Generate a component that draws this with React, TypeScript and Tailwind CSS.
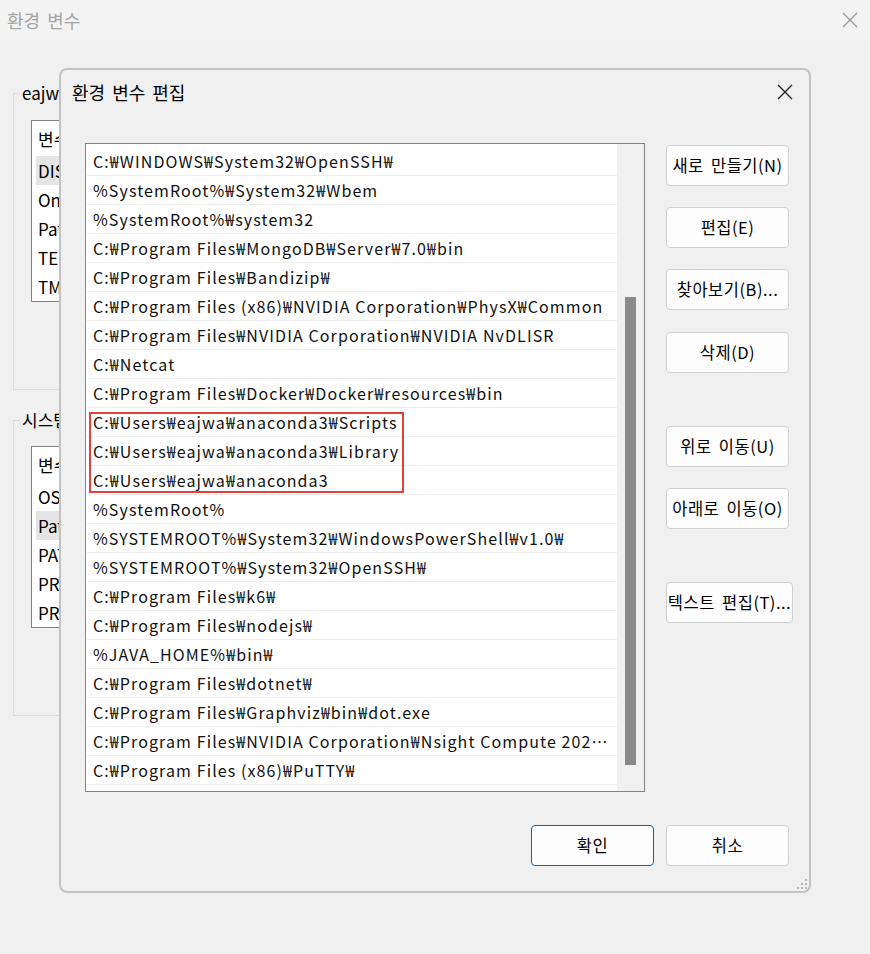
import React from 'react';

const paths = [
  'C:₩WINDOWS₩System32₩OpenSSH₩',
  '%SystemRoot%₩System32₩Wbem',
  '%SystemRoot%₩system32',
  'C:₩Program Files₩MongoDB₩Server₩7.0₩bin',
  'C:₩Program Files₩Bandizip₩',
  'C:₩Program Files (x86)₩NVIDIA Corporation₩PhysX₩Common',
  'C:₩Program Files₩NVIDIA Corporation₩NVIDIA NvDLISR',
  'C:₩Netcat',
  'C:₩Program Files₩Docker₩Docker₩resources₩bin',
  'C:₩Users₩eajwa₩anaconda3₩Scripts',
  'C:₩Users₩eajwa₩anaconda3₩Library',
  'C:₩Users₩eajwa₩anaconda3',
  '%SystemRoot%',
  '%SYSTEMROOT%₩System32₩WindowsPowerShell₩v1.0₩',
  '%SYSTEMROOT%₩System32₩OpenSSH₩',
  'C:₩Program Files₩k6₩',
  'C:₩Program Files₩nodejs₩',
  '%JAVA_HOME%₩bin₩',
  'C:₩Program Files₩dotnet₩',
  'C:₩Program Files₩Graphviz₩bin₩dot.exe',
  'C:₩Program Files₩NVIDIA Corporation₩Nsight Compute 2024.1.0₩',
  'C:₩Program Files (x86)₩PuTTY₩',
];

const userVars = ['DISPLAY', 'OneDrive', 'Path', 'TEMP', 'TMP'];
const sysVars = ['OS', 'Path', 'PATHEXT', 'PROCESSOR_ARCHITECTURE', 'PROCESSOR_IDENTIFIER'];

const font = { fontFamily: '"Noto Sans CJK KR", "Noto Sans", sans-serif' };

function CloseIcon({ color }: { color: string }) {
  return (
    <svg width="16" height="16" viewBox="0 0 16 16">
      <path d="M1 1L15 15M15 1L1 15" stroke={color} strokeWidth="1.3" />
    </svg>
  );
}

function VarList({ items, selected }: { items: string[]; selected: number }) {
  return (
    <div className="ml-[17px] w-[700px] bg-white border border-[#828282]">
      <div className="h-[35px] flex items-center pl-[6px] text-[17px] text-black">변수</div>
      {items.map((v, i) => (
        <div
          key={v + i}
          className={
            i === selected
              ? 'h-[29px] flex items-center ml-[4px] pl-[2px] text-[17px] text-black bg-[#e5e5e5]'
              : 'h-[29px] flex items-center ml-[4px] pl-[2px] text-[17px] text-black'
          }
        >
          {v}
        </div>
      ))}
    </div>
  );
}

function Btn({
  label,
  width = 'w-[123px]',
  border = 'border-[#d0d0d0]',
  className = '',
}: {
  label: string;
  width?: string;
  border?: string;
  className?: string;
}) {
  return (
    <div
      className={`${width} ${border} ${className} h-[41px] flex items-center justify-center rounded-[4px] border bg-[#fdfdfd] text-[16.5px] text-black whitespace-nowrap tracking-[0.5px] [word-spacing:3px]`}
    >
      {label}
    </div>
  );
}

export default function App() {
  return (
    <div className="relative w-[870px] h-[954px] bg-[#f0f0f0] overflow-hidden" style={font}>
      {/* parent window: 환경 변수 */}
      <div className="h-[40px] bg-[#f3f3f3] flex items-center justify-between pl-[7px] pr-[12px]">
        <span className="text-[18px] text-[#a3a3a3] [word-spacing:3px]">환경 변수</span>
        <CloseIcon color="#9a9a9a" />
      </div>

      {/* only the left strip of the parent window is left uncovered */}
      <div className="w-[61px] overflow-hidden">
        <div className="w-[780px] pl-[13px] pt-[53px] flex flex-col">
          <div className="relative h-[297px] w-[760px] border border-[#dcdcdc] pt-[26px]">
            <span className="absolute left-[6px] -top-[12px] px-[2px] bg-[#f0f0f0] text-[17px] leading-[22px] text-black">
              eajwa에 대한 사용자 변수(U)
            </span>
            <VarList items={userVars} selected={0} />
          </div>
          <div className="relative mt-[30px] h-[296px] w-[760px] border border-[#dcdcdc] pt-[25px]">
            <span className="absolute left-[6px] -top-[12px] px-[2px] bg-[#f0f0f0] text-[17px] leading-[22px] text-black">
              시스템 변수(S)
            </span>
            <VarList items={sysVars} selected={1} />
          </div>
        </div>
      </div>

      {/* dialog: 환경 변수 편집 */}
      <div className="absolute left-[59px] top-[68px] w-[752px] h-[825px] rounded-[8px] border-2 border-[#c2c2c2] bg-[#f0f0f0] flex flex-col">
        <div className="h-[42px] flex items-center justify-between pl-[11px] pr-[16px] pt-[2px]">
          <span className="text-[18px] text-black [word-spacing:3px]">환경 변수 편집</span>
          <CloseIcon color="#1a1a1a" />
        </div>

        <div className="flex pl-[24px] pt-[31px]">
          <div className="relative w-[560px] h-[649px] bg-white border border-[#828282] flex">
            <div className="w-[531px] pt-[3px] pl-[1px]">
              {paths.map((p) => (
                <div
                  key={p}
                  className="h-[29px] flex items-center border-b border-[#efefef] pl-[6px] pr-[2px] text-[16px] text-[#111] tracking-[1.1px]"
                >
                  <span className="truncate">{p}</span>
                </div>
              ))}
            </div>
            <div className="w-[27px] bg-[#f0f0f0] flex justify-center pt-[153px]">
              <div className="w-[11px] h-[468px] bg-[#8a8a8a]" />
            </div>
            <div className="absolute left-[3px] top-[268px] w-[315px] h-[81px] border-2 border-[#e04040]" />
          </div>

          <div className="ml-[21px] pt-[2px] flex flex-col w-[128px]">
            <Btn label="새로 만들기(N)" />
            <Btn label="편집(E)" className="mt-[21px]" />
            <Btn label="찾아보기(B)..." className="mt-[21px]" />
            <Btn label="삭제(D)" className="mt-[22px]" />
            <Btn label="위로 이동(U)" className="mt-[53px]" />
            <Btn label="아래로 이동(O)" className="mt-[21px]" />
            <Btn label="텍스트 편집(T)..." width="w-[127px]" className="mt-[53px]" />
          </div>
        </div>

        <div className="flex justify-end gap-[12px] pr-[20px] pt-[33px]">
          <Btn label="확인" border="border-[#0067c0]" />
          <Btn label="취소" />
        </div>

        <div className="flex-1 flex items-end justify-end pr-[1px] pb-[1px]">
          <svg width="12" height="12" viewBox="0 0 12 12">
            <rect x="9" y="1" width="2" height="2" fill="#b5b5b5" />
            <rect x="5" y="5" width="2" height="2" fill="#b5b5b5" />
            <rect x="9" y="5" width="2" height="2" fill="#b5b5b5" />
            <rect x="1" y="9" width="2" height="2" fill="#b5b5b5" />
            <rect x="5" y="9" width="2" height="2" fill="#b5b5b5" />
            <rect x="9" y="9" width="2" height="2" fill="#b5b5b5" />
          </svg>
        </div>
      </div>
    </div>
  );
}
